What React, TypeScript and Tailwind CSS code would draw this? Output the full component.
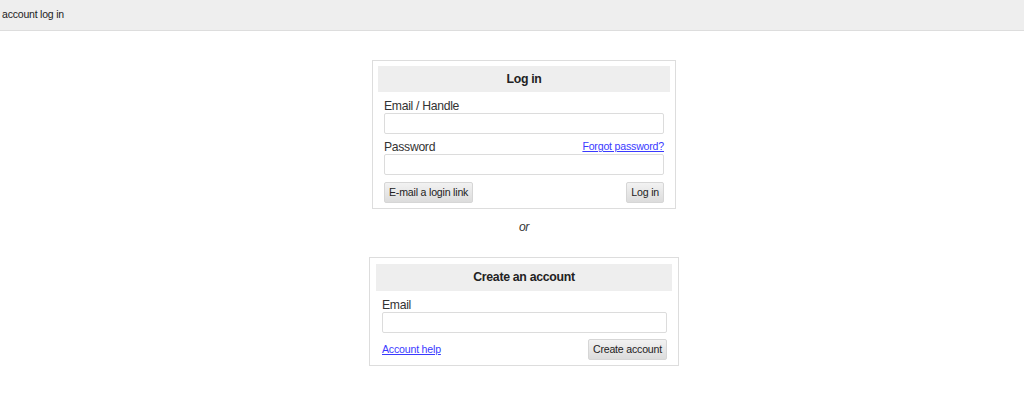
const font = { fontFamily: '"Liberation Sans", Arial, sans-serif' };

function Button({ children }: { children: React.ReactNode }) {
  return (
    <button className="h-[21px] px-[4px] rounded-[2px] border border-[#d6d6d6] bg-gradient-to-b from-[#f2f2f2] to-[#dcdcdc] text-[10.6px] tracking-[-0.2px] text-[#222] leading-none">
      {children}
    </button>
  );
}

function Field({ label, extra }: { label: string; extra?: React.ReactNode }) {
  return (
    <div className="flex flex-col">
      <div className="flex items-end justify-between h-[14px] mb-px">
        <span className="text-[12.2px] tracking-[-0.3px] leading-[12px] text-[#333]">{label}</span>
        {extra}
      </div>
      <input className="h-[21px] w-full border border-[#dcdcdc] rounded-[2px] bg-white outline-none" />
    </div>
  );
}

export default function App() {
  return (
    <div className="min-h-[401px] bg-white text-[#222]" style={font}>
      <div className="h-[31px] bg-[#eeeeee] border-b border-[#dddddd] flex items-center pl-[2px] text-[10.5px] tracking-[-0.2px] text-[#222]">
        account log in
      </div>

      <div className="flex flex-col items-center pl-6 pt-[29px]">
        {/* log in panel */}
        <div className="w-[304px] border border-[#dddddd] p-[5px]">
          <div className="h-[26px] bg-[#eeeeee] flex items-center justify-center font-bold text-[12.3px] tracking-[-0.3px]">
            Log in
          </div>
          <div className="px-[6px] pt-[6px] flex flex-col gap-[5px]">
            <Field label="Email / Handle" />
            <Field
              label="Password"
              extra={
                <a href="#" className="text-[10.6px] tracking-[-0.2px] leading-[12px] -translate-y-px text-[#3a3aff] underline">
                  Forgot password?
                </a>
              }
            />
            <div className="flex justify-between pt-[2px]">
              <Button>E-mail a login link</Button>
              <Button>Log in</Button>
            </div>
          </div>
        </div>

        <div className="pt-[11px] pb-[23px] h-[48px] flex items-center justify-center italic text-[12.2px] tracking-[-0.3px] text-[#333]">
          or
        </div>

        {/* sign up panel */}
        <div className="w-[310px] border border-[#dddddd] p-[6px]">
          <div className="h-[27px] bg-[#eeeeee] flex items-center justify-center font-bold text-[12.3px] tracking-[-0.3px]">
            Create an account
          </div>
          <div className="pl-[6px] pr-[5px] pt-[6px] flex flex-col gap-[6px]">
            <Field label="Email" />
            <div className="flex justify-between items-center -mb-px">
              <a href="#" className="text-[10.6px] tracking-[-0.2px] text-[#3a3aff] underline">
                Account help
              </a>
              <Button>Create account</Button>
            </div>
          </div>
        </div>
      </div>
    </div>
  );
}
